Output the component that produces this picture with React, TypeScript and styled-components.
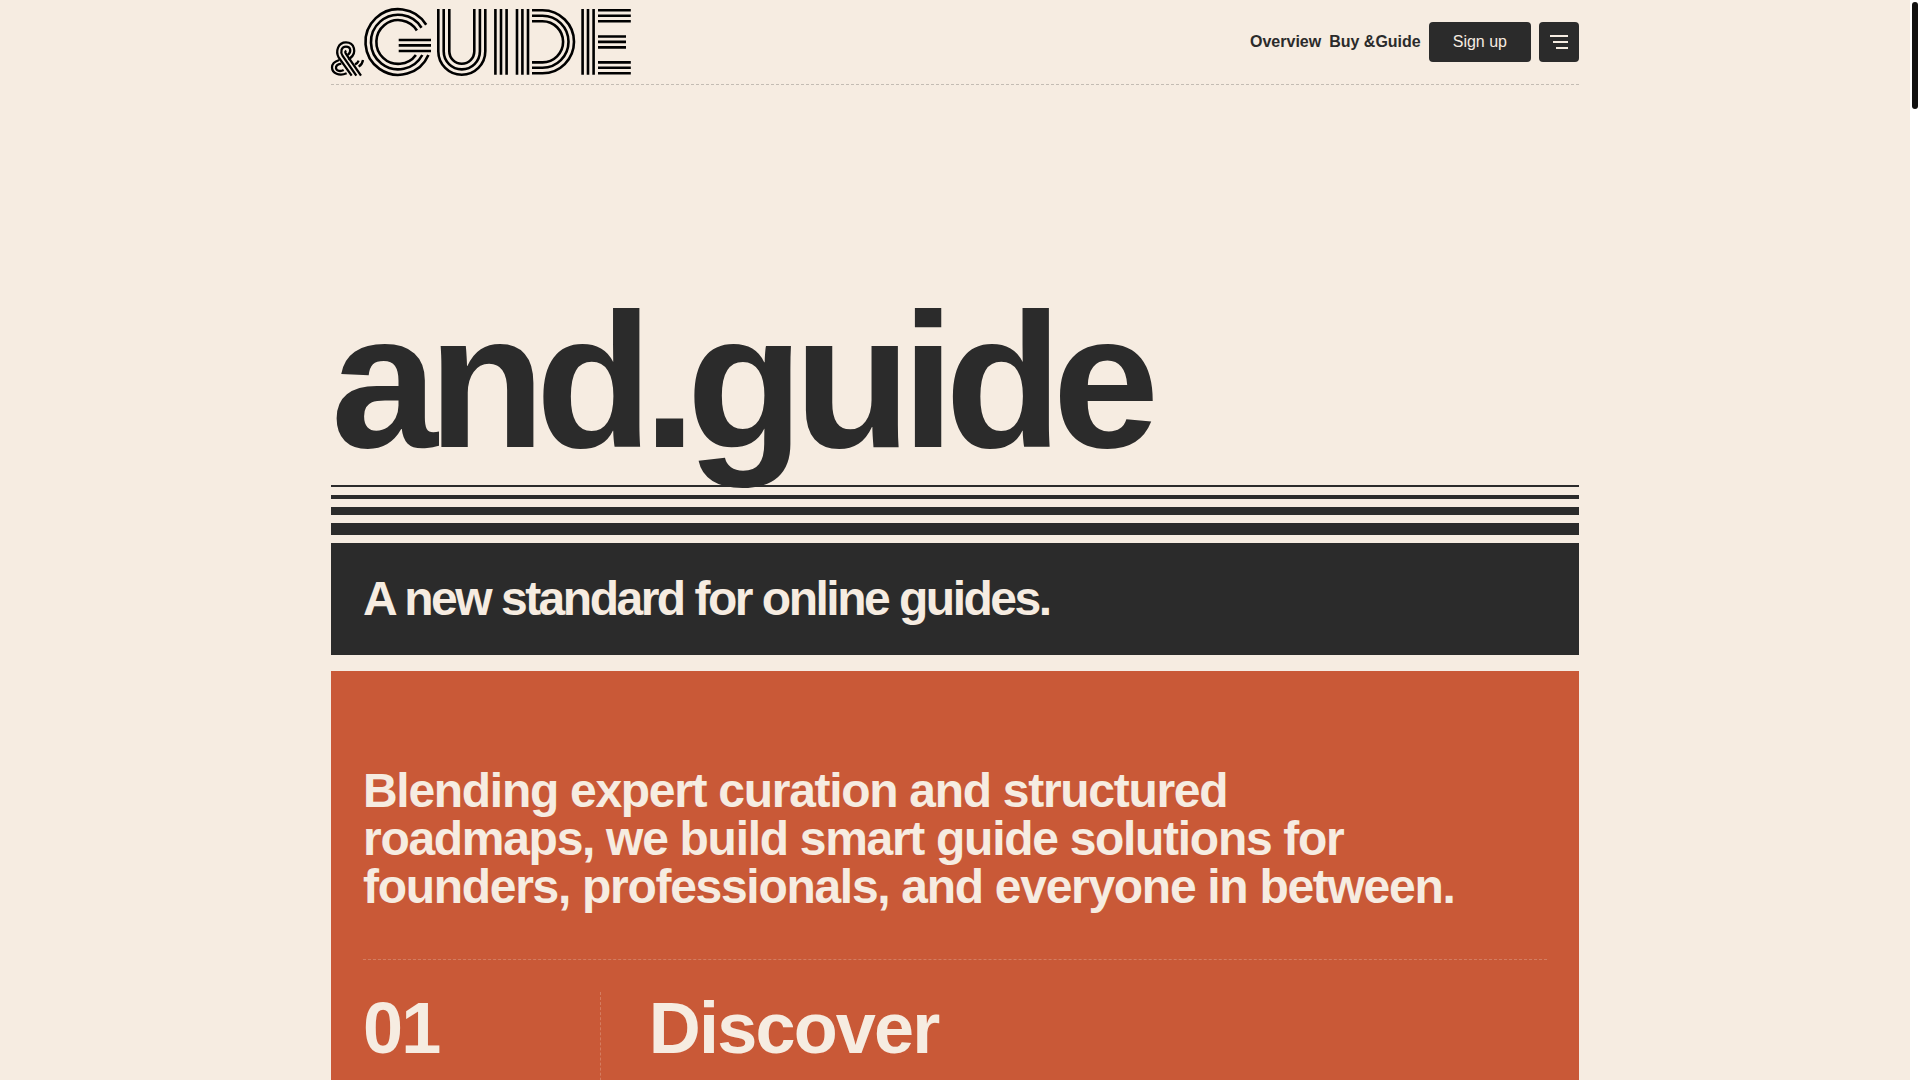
import React from "react";
import styled, { createGlobalStyle } from "styled-components";

const cream = "#f6ece1";
const ink = "#2b2b2b";
const rust = "#c95937";

const GlobalStyle = createGlobalStyle`
  *, *::before, *::after { box-sizing: border-box; }
  html { scrollbar-width: none; background: ${cream}; }
  body {
    margin: 0;
    background: ${cream};
    color: ${ink};
    font-family: "Liberation Sans", Arial, Helvetica, sans-serif;
    font-size: 16px;
  }
  h1, h2, h3, p { margin: 0; }
`;

const Page = styled.div`
  padding: 0 26px 0 16px;
`;

const Container = styled.div`
  max-width: 1248px;
  margin: 0 auto;
`;

const ScrollRail = styled.div`
  position: fixed;
  top: 0;
  right: 0;
  bottom: 0;
  width: 10px;
  padding: 2px;
  background: #ffffff;
`;

const ScrollThumb = styled.div`
  width: 6px;
  height: 107px;
  border-radius: 3px;
  background: #111111;
`;

const Header = styled.header`
  display: flex;
  align-items: center;
  justify-content: space-between;
  height: 85px;
  border-bottom: 1px dashed rgba(43, 43, 43, 0.25);
`;

const LogoLink = styled.a`
  display: block;
  color: #000000;
`;

const LogoSvg = styled.svg`
  display: block;
  width: 300px;
  height: 68px;
  overflow: visible;
  fill: none;
  stroke: currentColor;
`;

const Nav = styled.nav`
  display: flex;
  align-items: center;
  gap: 8px;
`;

const NavLink = styled.a`
  color: ${ink};
  font-weight: 700;
  text-decoration: none;
`;

const Button = styled.button<{ $square?: boolean }>`
  display: flex;
  align-items: center;
  justify-content: center;
  height: 40px;
  width: ${(p) => (p.$square ? "40px" : "auto")};
  padding: ${(p) => (p.$square ? "0" : "0 24px")};
  border: 0;
  border-radius: 4px;
  background: ${ink};
  color: ${cream};
  font: inherit;
  cursor: pointer;
`;

const MenuIcon = styled.svg`
  display: block;
  width: 18px;
  height: 14px;
  fill: ${cream};
`;

const Hero = styled.section`
  display: flex;
  flex-direction: column;
  gap: 8px;
  padding-top: 200px;
`;

const Title = styled.h1`
  font-size: 192px;
  line-height: 192px;
  letter-spacing: -0.051em;
`;

const Stripe = styled.div<{ $height: number }>`
  height: ${(p) => p.$height}px;
  background: ${ink};
`;

const Tagline = styled.h2`
  padding: 32px;
  background: ${ink};
  color: ${cream};
  font-size: 48px;
  line-height: 48px;
  letter-spacing: -0.052em;
`;

const Panel = styled.section`
  margin-top: 16px;
  padding: 96px 32px;
  background: ${rust};
  color: ${cream};
`;

const Lead = styled.p`
  max-width: 1104px;
  font-size: 48px;
  font-weight: 700;
  line-height: 48px;
  letter-spacing: -0.027em;
`;

const Step = styled.div`
  display: grid;
  grid-template-columns: 1fr 4fr;
  margin-top: 48px;
  padding-top: 32px;
  border-top: 1px dashed rgba(245, 236, 224, 0.25);
`;

const StepNumber = styled.p`
  font-size: 72px;
  font-weight: 700;
  line-height: 72px;
  letter-spacing: -0.025em;
`;

const StepBody = styled.div`
  min-height: 240px;
  padding-left: 48px;
  border-left: 1px dashed rgba(245, 236, 224, 0.25);
`;

const StepTitle = styled.h3`
  font-size: 72px;
  line-height: 72px;
  letter-spacing: -0.025em;
`;

function Logo() {
  return (
    <LogoSvg viewBox="0 0 300 68" role="img" aria-label="&Guide">
      {/* ampersand */}
      <g transform="translate(-3 28) scale(0.3333)" strokeWidth="6.8">
        <path d="M71 119 L32 64 C22 46 30 19 54 19 C80 19 87 50 67 66 L61 71" />
        <path d="M85 119 L44 60 C36 47 40 32 54 32 C69 32 71 47 59 57" />
        <path d="M99 119 L54 54 C51 49 51 46 55 44" />
        <path d="M34 72 C18 77 12 84 12 94 C12 112 34 122 56 112" />
        <path d="M40 83 C28 85 23 90 24 97 C26 106 38 107 47 102" />
        <path d="M105 72 C104 80 98 88 92 92" />
        <path d="M92 74 C90 80 86 83 81 85" />
      </g>
      <g strokeWidth="2.6">
        {/* G */}
        <path d="M95.2 16.8 A32.8 32.8 0 1 0 97.4 47" />
        <path d="M90.5 19.7 A27.3 27.3 0 1 0 91.3 47" />
        <path d="M85.9 22.5 A21.9 21.9 0 1 0 84.9 47" />
        <path d="M67.7 32 H100 M67.7 37.4 H100 M67.7 43 H100" />
        {/* U */}
        <path d="M107.3 1 V43.3 A23.5 23.5 0 0 0 154.3 43.3 V1" />
        <path d="M112.7 1 V43.3 A18.1 18.1 0 0 0 148.9 43.3 V1" />
        <path d="M118.3 1 V43.3 A12.5 12.5 0 0 0 143.3 43.3 V1" />
        {/* I */}
        <path d="M164.4 1 V66.7 M170 1 V66.7 M175.6 1 V66.7" />
        {/* D */}
        <path d="M186 1 V66.7 M191.4 1 V66.7 M197 1 V66.7" />
        <path d="M201 2.3 H211.5 A31.5 31.5 0 0 1 211.5 65.3 H201" />
        <path d="M201 7.8 H211.5 A26 26 0 0 1 211.5 59.8 H201" />
        <path d="M201 13.2 H211.5 A20.6 20.6 0 0 1 211.5 54.4 H201" />
        {/* E */}
        <path d="M251.6 1 V66.7 M257 1 V66.7 M262.6 1 V66.7" />
        <path d="M267 2.3 H299.8 M267 7.8 H299.8 M267 13.2 H299.8" />
        <path d="M267 28.5 H295 M267 33.9 H295 M267 39.4 H295" />
        <path d="M267 54.4 H299.8 M267 59.8 H299.8 M267 65.3 H299.8" />
      </g>
    </LogoSvg>
  );
}

export default function App() {
  return (
    <>
      <GlobalStyle />
      <Page>
        <Container>
          <Header>
            <LogoLink href="#">
              <Logo />
            </LogoLink>
            <Nav aria-label="Main">
              <NavLink href="#overview">Overview</NavLink>
              <NavLink href="#buy">Buy &amp;Guide</NavLink>
              <Button type="button">Sign up</Button>
              <Button type="button" $square aria-label="Menu">
                <MenuIcon viewBox="0 0 18 14" aria-hidden="true">
                  <rect x="0" y="0" width="18" height="2" />
                  <rect x="3" y="6" width="15" height="2" />
                  <rect x="6" y="12" width="12" height="2" />
                </MenuIcon>
              </Button>
            </Nav>
          </Header>
          <main>
            <Hero>
              <Title>and.guide</Title>
              {[2, 4, 8, 12].map((height) => (
                <Stripe key={height} $height={height} />
              ))}
              <Tagline>A new standard for online guides.</Tagline>
            </Hero>
            <Panel id="overview">
              <Lead>
                Blending expert curation and structured roadmaps, we build smart guide solutions for
                founders, professionals, and everyone in between.
              </Lead>
              <Step>
                <StepNumber>01</StepNumber>
                <StepBody>
                  <StepTitle>Discover</StepTitle>
                </StepBody>
              </Step>
            </Panel>
          </main>
        </Container>
      </Page>
      <ScrollRail aria-hidden="true">
        <ScrollThumb />
      </ScrollRail>
    </>
  );
}
